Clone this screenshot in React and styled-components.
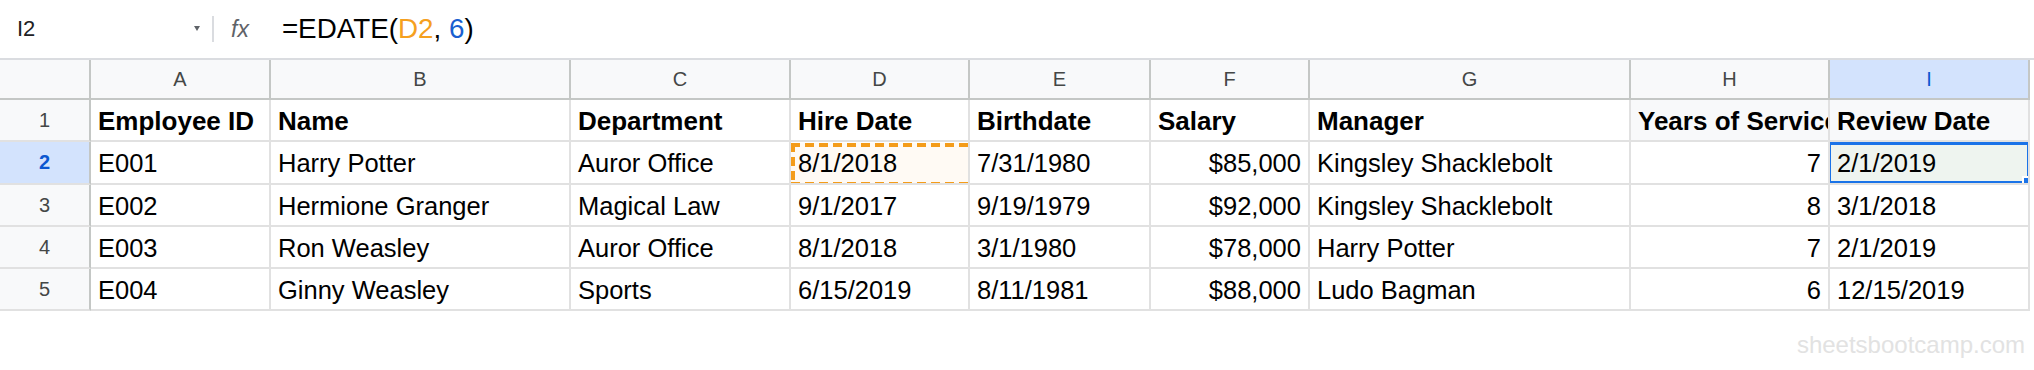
import React from 'react';
import styled, { createGlobalStyle } from 'styled-components';

const GlobalStyle = createGlobalStyle`
  body {
    margin: 0;
    background: #ffffff;
    font-family: "Liberation Sans", Arial, sans-serif;
  }
`;

const columns = [
  { key: 'A', width: 180 },
  { key: 'B', width: 300 },
  { key: 'C', width: 220 },
  { key: 'D', width: 179 },
  { key: 'E', width: 181 },
  { key: 'F', width: 159 },
  { key: 'G', width: 321 },
  { key: 'H', width: 199 },
  { key: 'I', width: 200 },
];

const header = ['Employee ID', 'Name', 'Department', 'Hire Date', 'Birthdate', 'Salary', 'Manager', 'Years of Service', 'Review Date'];

const rows = [
  ['E001', 'Harry Potter', 'Auror Office', '8/1/2018', '7/31/1980', '$85,000', 'Kingsley Shacklebolt', '7', '2/1/2019'],
  ['E002', 'Hermione Granger', 'Magical Law', '9/1/2017', '9/19/1979', '$92,000', 'Kingsley Shacklebolt', '8', '3/1/2018'],
  ['E003', 'Ron Weasley', 'Auror Office', '8/1/2018', '3/1/1980', '$78,000', 'Harry Potter', '7', '2/1/2019'],
  ['E004', 'Ginny Weasley', 'Sports', '6/15/2019', '8/11/1981', '$88,000', 'Ludo Bagman', '6', '12/15/2019'],
];

// columns holding numbers are right aligned
const numeric = [5, 7];

const App = () => {
  return (
    <>
      <GlobalStyle />
      <Page>
        <FormulaBar>
          <NameBox>
            <span>I2</span>
            <Caret />
          </NameBox>
          <Divider />
          <Fx>fx</Fx>
          <Formula>
            =EDATE(<RefToken>D2</RefToken>, <NumToken>6</NumToken>)
          </Formula>
        </FormulaBar>

        <Sheet>
          <Corner />
          {columns.map((col) => (
            <ColHeader key={col.key} $active={col.key === 'I'}>
              {col.key}
            </ColHeader>
          ))}

          <RowHeader>1</RowHeader>
          {header.map((text, i) => (
            <Cell key={text} $bold $shade={i >= 7}>
              <CellText>{text}</CellText>
            </Cell>
          ))}

          {rows.map((row, r) => (
            <React.Fragment key={row[0]}>
              <RowHeader $active={r === 0}>{r + 2}</RowHeader>
              {row.map((text, i) => (
                <Cell key={i} $right={numeric.includes(i)}>
                  {r === 0 && i === 3 && <CopyMarquee />}
                  {r === 0 && i === 8 && (
                    <ActiveCell>
                      <FillHandle />
                    </ActiveCell>
                  )}
                  <CellText>{text}</CellText>
                </Cell>
              ))}
            </React.Fragment>
          ))}
        </Sheet>

        <Footer>
          <Watermark>sheetsbootcamp.com</Watermark>
        </Footer>
      </Page>
    </>
  );
};

const Page = styled.div`
  width: 2034px;
  height: 370px;
  overflow: hidden;
  background: #ffffff;
`;

const FormulaBar = styled.div`
  height: 58px;
  display: flex;
  align-items: center;
  border-bottom: 2px solid #dadce0;
`;

const NameBox = styled.div`
  width: 212px;
  box-sizing: border-box;
  padding: 0 12px 0 17px;
  display: flex;
  align-items: center;
  justify-content: space-between;
  font-size: 22px;
  color: #202124;
`;

const Caret = styled.span`
  width: 0;
  height: 0;
  border-left: 3.5px solid transparent;
  border-right: 3.5px solid transparent;
  border-top: 5px solid #5f6368;
  margin-top: -2px;
`;

const Divider = styled.div`
  width: 2px;
  height: 26px;
  background: #dadce0;
`;

const Fx = styled.span`
  margin-left: 17px;
  font-size: 23px;
  font-style: italic;
  color: #5f6368;
`;

const Formula = styled.div`
  margin-left: 33px;
  font-size: 27.8px;
  color: #000000;
`;

const RefToken = styled.span`
  color: #f5a01f;
`;

const NumToken = styled.span`
  color: #1a5fd0;
`;

const Sheet = styled.div`
  display: grid;
  grid-template-columns: 91px ${columns.map((c) => `${c.width}px`).join(' ')};
  grid-template-rows: 40px 42px 43px 42px 42px 42px;
  width: 2030px;
`;

const Corner = styled.div`
  background: #f8f9fa;
  border-right: 2px solid #c4c7c5;
  border-bottom: 2px solid #c4c7c5;
`;

const ColHeader = styled.div`
  display: flex;
  align-items: center;
  justify-content: center;
  background: ${(p) => (p.$active ? '#d3e3fd' : '#f8f9fa')};
  color: ${(p) => (p.$active ? '#0b57d0' : '#444746')};
  border-right: 2px solid #c4c7c5;
  border-bottom: 2px solid #c4c7c5;
  font-size: 20px;
`;

const RowHeader = styled.div`
  display: flex;
  align-items: center;
  justify-content: center;
  background: ${(p) => (p.$active ? '#d3e3fd' : '#f8f9fa')};
  color: ${(p) => (p.$active ? '#0b57d0' : '#444746')};
  font-weight: ${(p) => (p.$active ? 700 : 400)};
  border-right: 2px solid #c4c7c5;
  border-bottom: 2px solid #e1e1e1;
  font-size: 20px;
`;

const Cell = styled.div`
  position: relative;
  display: flex;
  align-items: center;
  justify-content: ${(p) => (p.$right ? 'flex-end' : 'flex-start')};
  padding: 2px 7px 0 7px;
  overflow: hidden;
  white-space: nowrap;
  background: ${(p) => (p.$shade ? '#f8f9fa' : '#ffffff')};
  border-right: 2px solid #e1e1e1;
  border-bottom: 2px solid #e1e1e1;
  font-size: ${(p) => (p.$bold ? '26px' : '25.5px')};
  font-weight: ${(p) => (p.$bold ? 700 : 400)};
  color: #000000;
`;

const CellText = styled.span`
  position: relative;
`;

const dashH = 'repeating-linear-gradient(90deg, #f49c1a 0 9px, transparent 9px 14px)';
const dashV = 'repeating-linear-gradient(180deg, #f49c1a 0 9px, transparent 9px 14px)';

const CopyMarquee = styled.div`
  position: absolute;
  left: 0;
  top: 1px;
  right: -4px;
  bottom: -3px;
  background:
    ${dashH} left top / 100% 4px no-repeat,
    ${dashH} left bottom / 100% 4px no-repeat,
    ${dashV} left top / 4px 100% no-repeat,
    ${dashV} right top / 4px 100% no-repeat,
    #fffaf4;
`;

const ActiveCell = styled.div`
  position: absolute;
  left: -2px;
  top: 0;
  right: -2px;
  bottom: -1px;
  border: 3.5px solid #1a73e8;
  background: #eef4ef;
`;

const FillHandle = styled.div`
  position: absolute;
  right: -5px;
  bottom: -5px;
  width: 6px;
  height: 6px;
  background: #1a73e8;
  border: 2px solid #ffffff;
`;

const Footer = styled.div`
  height: 58px;
  display: flex;
  align-items: center;
  justify-content: flex-end;
  padding-right: 9px;
  padding-top: 5px;
`;

const Watermark = styled.span`
  font-size: 24px;
  color: #e2e2e2;
`;

export default App;
